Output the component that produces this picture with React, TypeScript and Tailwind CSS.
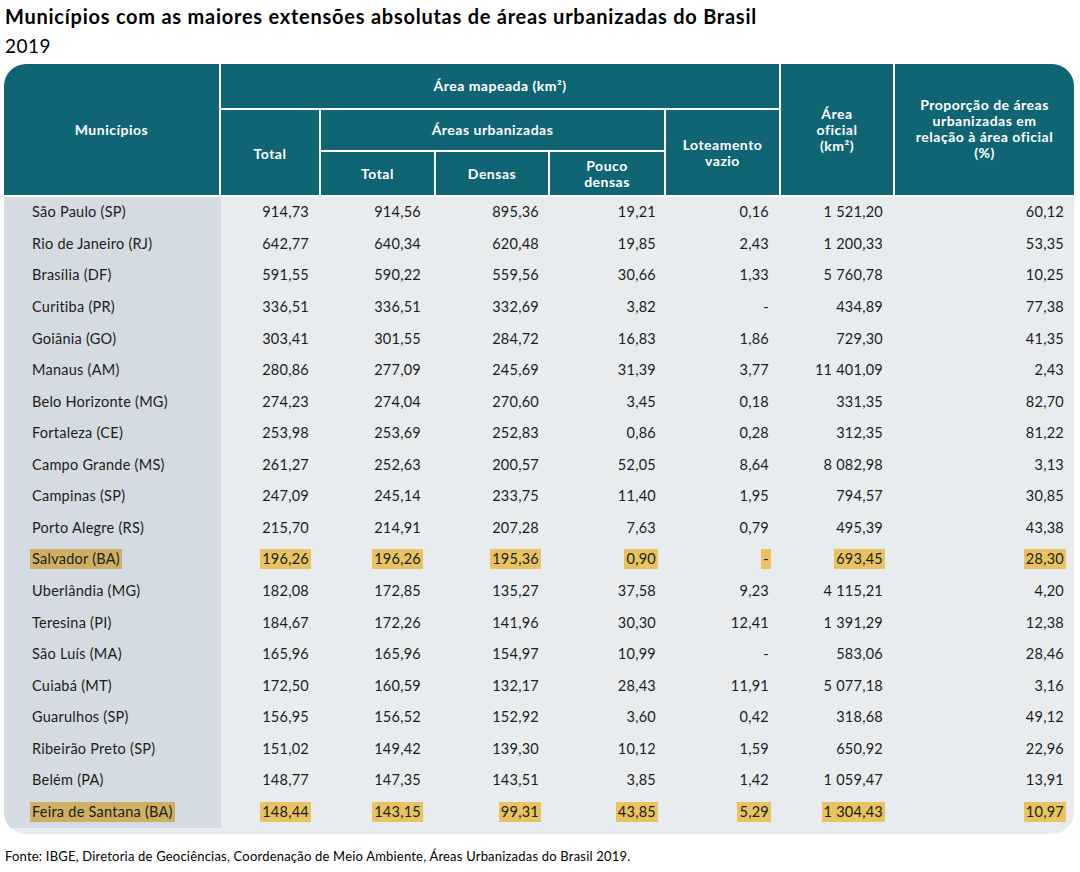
import React from "react";

type Row = { name: string; v: string[]; hl?: boolean };

const rows: Row[] = [
  { name: "São Paulo (SP)", v: ["914,73", "914,56", "895,36", "19,21", "0,16", "1 521,20", "60,12"] },
  { name: "Rio de Janeiro (RJ)", v: ["642,77", "640,34", "620,48", "19,85", "2,43", "1 200,33", "53,35"] },
  { name: "Brasília (DF)", v: ["591,55", "590,22", "559,56", "30,66", "1,33", "5 760,78", "10,25"] },
  { name: "Curitiba (PR)", v: ["336,51", "336,51", "332,69", "3,82", "-", "434,89", "77,38"] },
  { name: "Goiânia (GO)", v: ["303,41", "301,55", "284,72", "16,83", "1,86", "729,30", "41,35"] },
  { name: "Manaus (AM)", v: ["280,86", "277,09", "245,69", "31,39", "3,77", "11 401,09", "2,43"] },
  { name: "Belo Horizonte (MG)", v: ["274,23", "274,04", "270,60", "3,45", "0,18", "331,35", "82,70"] },
  { name: "Fortaleza (CE)", v: ["253,98", "253,69", "252,83", "0,86", "0,28", "312,35", "81,22"] },
  { name: "Campo Grande (MS)", v: ["261,27", "252,63", "200,57", "52,05", "8,64", "8 082,98", "3,13"] },
  { name: "Campinas (SP)", v: ["247,09", "245,14", "233,75", "11,40", "1,95", "794,57", "30,85"] },
  { name: "Porto Alegre (RS)", v: ["215,70", "214,91", "207,28", "7,63", "0,79", "495,39", "43,38"] },
  { name: "Salvador (BA)", v: ["196,26", "196,26", "195,36", "0,90", "-", "693,45", "28,30"], hl: true },
  { name: "Uberlândia (MG)", v: ["182,08", "172,85", "135,27", "37,58", "9,23", "4 115,21", "4,20"] },
  { name: "Teresina (PI)", v: ["184,67", "172,26", "141,96", "30,30", "12,41", "1 391,29", "12,38"] },
  { name: "São Luís (MA)", v: ["165,96", "165,96", "154,97", "10,99", "-", "583,06", "28,46"] },
  { name: "Cuiabá (MT)", v: ["172,50", "160,59", "132,17", "28,43", "11,91", "5 077,18", "3,16"] },
  { name: "Guarulhos (SP)", v: ["156,95", "156,52", "152,92", "3,60", "0,42", "318,68", "49,12"] },
  { name: "Ribeirão Preto (SP)", v: ["151,02", "149,42", "139,30", "10,12", "1,59", "650,92", "22,96"] },
  { name: "Belém (PA)", v: ["148,77", "147,35", "143,51", "3,85", "1,42", "1 059,47", "13,91"] },
  { name: "Feira de Santana (BA)", v: ["148,44", "143,15", "99,31", "43,85", "5,29", "1 304,43", "10,97"], hl: true },
];

const padR = ["pr-[10px]", "pr-[13px]", "pr-[9px]", "pr-[8px]", "pr-[10px]", "pr-[10px]", "pr-[8px]"];

const head =
  "bg-[#106575] text-white font-bold text-[14px] tracking-[0.5px] leading-[16px] flex items-center justify-center text-center";

export default function App() {
  return (
    <div className="w-[1080px] h-[872px] bg-white text-[#1c1c1c] font-['Lato','Noto_Sans',sans-serif]">
      <div className="pl-[5px] pt-[4px]">
        <h1 className="text-[20px] tracking-[0.75px] font-bold leading-[24px] text-black">
          Municípios com as maiores extensões absolutas de áreas urbanizadas do Brasil
        </h1>
        <p className="text-[19px] tracking-[0.5px] leading-[24px] mt-[6px] text-black">2019</p>
      </div>

      <div className="ml-[4px] mt-[6px] w-[1070px] flex flex-col gap-[2px] rounded-[22px] overflow-hidden">
        <div className="grid grid-cols-[215px_98px_113px_112px_114px_113px_112px_179px] grid-rows-[44px_40px_43px] gap-[2px] bg-white">
          <div className={`${head} row-span-3`}>Municípios</div>
          <div className={`${head} col-span-5`}>Área mapeada (km²)</div>
          <div className={`${head} row-span-3`}>Área<br />oficial<br />(km²)</div>
          <div className={`${head} row-span-3 pb-[2px]`}>
            Proporção de áreas<br />urbanizadas em<br />relação à área oficial<br />(%)
          </div>
          <div className={`${head} row-span-2 pt-[2px]`}>Total</div>
          <div className={`${head} col-span-3`}>Áreas urbanizadas</div>
          <div className={`${head} row-span-2`}>Loteamento<br />vazio</div>
          <div className={head}>Total</div>
          <div className={head}>Densas</div>
          <div className={head}>Pouco<br />densas</div>
        </div>

        <div className="grid grid-cols-[217px_100px_115px_114px_116px_115px_114px_179px] bg-[#e8ecef] pb-[6px] text-[14.5px] tracking-[0.25px]">
          {rows.map((r) => (
            <React.Fragment key={r.name}>
              <div className="bg-[#d4dbe2] h-[31.55px] flex items-center pl-[26px] pb-[1px]">
                <span className={r.hl ? "bg-[#cfb062] px-[2px] leading-[20px]" : "px-[2px]"}>{r.name}</span>
              </div>
              {r.v.map((x, i) => (
                <div key={i} className={`h-[31.55px] flex items-center justify-end pb-[1px] ${padR[i]}`}>
                  <span className={r.hl ? "bg-[#e9c35f] px-[2px] leading-[20px]" : "px-[2px]"}>{x}</span>
                </div>
              ))}
            </React.Fragment>
          ))}
        </div>
      </div>

      <p className="pl-[5px] mt-[13px] text-[13px] tracking-[0.2px] text-black">
        Fonte: IBGE, Diretoria de Geociências, Coordenação de Meio Ambiente, Áreas Urbanizadas do Brasil 2019.
      </p>
    </div>
  );
}
